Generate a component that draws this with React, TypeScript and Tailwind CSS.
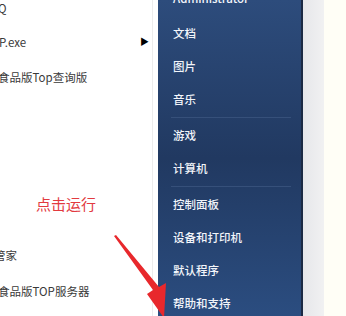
import React from "react";

const font = { fontFamily: '"Microsoft YaHei", "Noto Sans CJK SC", "Noto Sans", sans-serif' };

const rightItems: Array<{ label: string; y: number; sep?: boolean }> = [
  { label: "文档", y: 33 },
  { label: "图片", y: 66 },
  { label: "音乐", y: 99, sep: true },
  { label: "游戏", y: 135 },
  { label: "计算机", y: 168, sep: true },
  { label: "控制面板", y: 204 },
  { label: "设备和打印机", y: 237 },
  { label: "默认程序", y: 270 },
  { label: "帮助和支持", y: 303 },
];

export default function App() {
  return (
    <div className="relative flex h-[316px] w-[346px] overflow-hidden bg-[#fffef6]" style={font}>
      {/* left program list */}
      <div className="relative flex w-[158px] shrink-0 flex-col overflow-hidden bg-white text-[11.5px] text-[#3a3a3a]">
        <div className="absolute right-[5px] top-0 h-full w-px bg-[#ececec]" />
        <div className="-ml-[2px] mt-[-2px] h-[20px] leading-[20px]">Q</div>
        <div className="mt-[14px] flex h-[20px] items-center justify-between pr-[9px] leading-[20px]">
          <span className="-ml-[1px]">P.exe</span>
          <span className="text-[9px] text-black">▶</span>
        </div>
        <div className="-ml-[2px] mt-[15px] h-[20px] leading-[20px]">食品版Top查询版</div>
        <div className="ml-[36px] mt-[107px] h-[20px] text-[15px] leading-[20px] text-[#e23a3f]">点击运行</div>
        <div className="-ml-[6px] mt-[31px] h-[20px] leading-[20px]">管家</div>
        <div className="-ml-[2px] mt-[16px] h-[20px] leading-[20px]">食品版TOP服务器</div>
      </div>

      {/* blue places column */}
      <div className="relative w-[143px] shrink-0 bg-gradient-to-b from-[#2d4c7c] via-[#213961] to-[#2b4d80] text-[11.5px] font-medium text-[#f2f5fa]">
        <div className="absolute left-[15px] top-[-12px] leading-[20px]">Administrator</div>
        {rightItems.map((it) => (
          <React.Fragment key={it.label}>
            <div className="absolute left-[15px] leading-[20px]" style={{ top: it.y - 10 }}>
              {it.label}
            </div>
            {it.sep && (
              <div
                className="absolute left-[13px] h-px w-[120px] bg-[#36507a]"
                style={{ top: it.y + 18 }}
              />
            )}
          </React.Fragment>
        ))}
      </div>
      <div className="w-[2px] shrink-0 bg-[#1b2a44]" />
      <div className="w-[21px] shrink-0 bg-gradient-to-r from-[#e6e7ea] to-[#f1f1f2]" />

      {/* red arrow annotation */}
      <svg className="absolute left-0 top-0" width="346" height="316" viewBox="0 0 346 316">
        <path d="M114 236 L153 290 L147 294 L164 318 L166 283 L159 287 L116 235 Z" fill="#e8282c" />
      </svg>
    </div>
  );
}
